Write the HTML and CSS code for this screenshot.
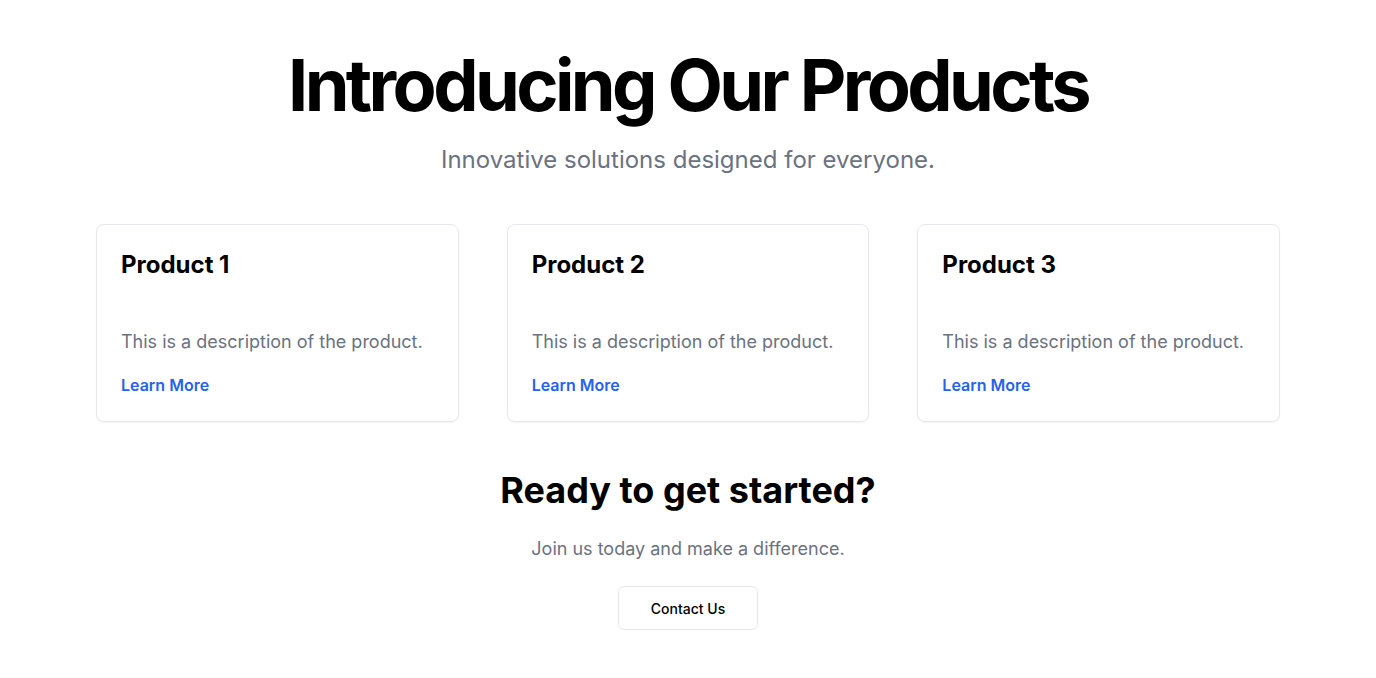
FILE: index.html
```html
<!DOCTYPE html>
<html>
<head>
<meta charset="utf-8">
<link rel="stylesheet" href="styles.css">
</head>
<body>
<main class="page">
  <section class="hero">
    <h1 class="hero-title">Introducing Our Products</h1>
    <p class="hero-sub">Innovative solutions designed for everyone.</p>
  </section>
  <section class="cards">
    <div class="card">
      <h3 class="card-title">Product 1</h3>
      <p class="card-desc">This is a description of the product.</p>
      <a class="card-link" href="#">Learn More</a>
    </div>
    <div class="card">
      <h3 class="card-title">Product 2</h3>
      <p class="card-desc">This is a description of the product.</p>
      <a class="card-link" href="#">Learn More</a>
    </div>
    <div class="card">
      <h3 class="card-title">Product 3</h3>
      <p class="card-desc">This is a description of the product.</p>
      <a class="card-link" href="#">Learn More</a>
    </div>
  </section>
  <section class="cta">
    <h2 class="cta-title">Ready to get started?</h2>
    <p class="cta-sub">Join us today and make a difference.</p>
    <button class="cta-btn">Contact Us</button>
  </section>
</main>
</body>
</html>
```
FILE: styles.css
```css
* { box-sizing: border-box; }
html, body { margin: 0; padding: 0; background: #fff; }
body { font-family: Inter, "Noto Sans", sans-serif; color: #000; }
.page { max-width: 1280px; margin: 0 auto; padding: 40px 48px; }
.hero { display: flex; flex-direction: column; align-items: center; text-align: center; }
.hero-title { margin: 0; font-size: 72px; line-height: 90px; font-weight: 700; letter-spacing: -0.05em; }
.hero-sub { margin: 14px 0 0; font-size: 24px; line-height: 32px; color: #6b7280; }
.cards { display: grid; grid-template-columns: repeat(3, 1fr); gap: 48px; margin-top: 48px; }
.card { border: 1px solid #e5e7eb; border-radius: 8px; box-shadow: 0 1px 2px rgba(0,0,0,0.05); padding: 24px; display: flex; flex-direction: column; }
.card-title { margin: 0; font-size: 24px; line-height: 32px; font-weight: 700; }
.card-desc { margin: 49px 0 0; font-size: 18px; line-height: 24px; color: #6b7280; }
.card-link { margin-top: 19px; font-size: 16px; line-height: 24px; font-weight: 600; color: #2563eb; text-decoration: none; }
.cta { display: flex; flex-direction: column; align-items: center; text-align: center; margin-top: 48px; }
.cta-title { margin: 0; font-size: 36px; line-height: 40px; font-weight: 700; }
.cta-sub { margin: 25px 0 0; font-size: 18px; line-height: 28px; color: #6b7280; }
.cta-btn { margin-top: 23px; height: 44px; width: 140px; padding: 0; background: #fff; border: 1px solid #e5e7eb; border-radius: 6px; font-family: Inter, sans-serif; font-size: 14px; font-weight: 500; color: #000; }
```
